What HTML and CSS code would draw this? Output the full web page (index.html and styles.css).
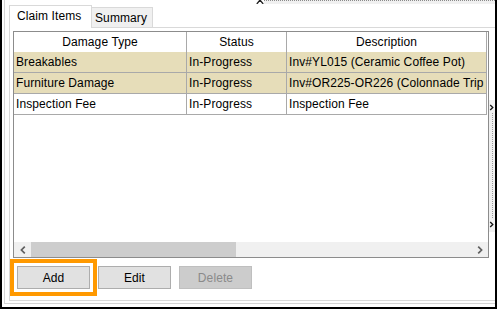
FILE: index.html
```html
<!DOCTYPE html>
<html>
<head>
<meta charset="utf-8">
<link rel="stylesheet" href="styles.css">
</head>
<body>
<div class="frame">
  <div class="outer">
    <div class="topstrip">
      <svg class="xmark" width="8" height="4" viewBox="0 0 8 4"><path d="M4 0 L0.8 4 M4 0 L7.2 4" stroke="#222" stroke-width="1.3" fill="none"/></svg>
      <div class="dots"></div>
    </div>
    <div class="tabs">
      <div class="tab active">Claim Items</div>
      <div class="tab">Summary</div>
    </div>
    <div class="panel">
      <div class="panel-row">
        <div class="grid">
          <div class="row head">
            <div class="cell">Damage Type</div>
            <div class="cell">Status</div>
            <div class="cell">Description</div>
          </div>
          <div class="row data sel">
            <div class="cell">Breakables</div>
            <div class="cell">In-Progress</div>
            <div class="cell">Inv#YL015 (Ceramic Coffee Pot)</div>
          </div>
          <div class="row data sel">
            <div class="cell">Furniture Damage</div>
            <div class="cell">In-Progress</div>
            <div class="cell">Inv#OR225-OR226 (Colonnade Trip</div>
          </div>
          <div class="row data">
            <div class="cell">Inspection Fee</div>
            <div class="cell">In-Progress</div>
            <div class="cell">Inspection Fee</div>
          </div>
          <div class="hscroll">
            <div class="sbtn"><svg width="6" height="8" viewBox="0 0 6 8"><path d="M4.8 0.6 L1.4 4 L4.8 7.4" stroke="#606060" stroke-width="1.7" fill="none"/></svg></div>
            <div class="thumb"></div>
            <div class="track"></div>
            <div class="sbtn"><svg width="6" height="8" viewBox="0 0 6 8"><path d="M1.2 0.6 L4.6 4 L1.2 7.4" stroke="#606060" stroke-width="1.7" fill="none"/></svg></div>
          </div>
        </div>
        <svg class="sliver" width="6" height="132" viewBox="0 0 6 132">
          <rect x="0" y="0" width="6" height="132" fill="#f0f0f0"/>
          <path d="M1.2 5 L3.8 7.5 L1.2 10" stroke="#111" stroke-width="1.3" fill="none"/>
          <line x1="3.5" y1="13" x2="3.5" y2="119" stroke="#9a9a9a" stroke-width="1" stroke-dasharray="1 1"/>
          <path d="M1.2 122 L3.8 124.5 L1.2 127" stroke="#111" stroke-width="1.3" fill="none"/>
        </svg>
      </div>
      <div class="buttons">
        <button class="btn focus">Add</button>
        <button class="btn">Edit</button>
        <button class="btn disabled">Delete</button>
      </div>
    </div>
  </div>
</div>
</body>
</html>
```
FILE: styles.css
```css
* { box-sizing: border-box; }
html, body { margin: 0; padding: 0; background: #fff; }
body {
  font-family: "Liberation Sans", Arial, sans-serif;
  font-size: 12px;
  letter-spacing: 0.1px;
  color: #000;
}
.frame {
  width: 497px;
  height: 309px;
  border-left: 2px solid #000;
  border-right: 2px solid #000;
  border-bottom: 2px solid #000;
  padding-left: 2px;
}
.outer {
  height: 304px;
  border-left: 1px solid #d5d5d5;
  border-bottom: 1px solid #d5d5d5;
  padding-left: 4px;
  display: flex;
  flex-direction: column;
}
.topstrip {
  height: 5px;
  display: flex;
  align-items: flex-start;
}
.xmark { margin-left: 247px; display: block; flex: none; }
.dots {
  flex: 1;
  height: 4px;
  border-top: 1px dotted #8a8a8a;
  background: #f0f0f0;
}
.tabs {
  height: 23px;
  display: flex;
  align-items: flex-end;
  margin-bottom: -1px;
  position: relative;
  z-index: 1;
}
.tab {
  border: 1px solid #d9d9d9;
  border-bottom: 0;
  line-height: 14px;
  white-space: nowrap;
}
.tab.active {
  width: 83px;
  height: 23px;
  background: #fff;
  padding: 3px 0 0 7px;
}
.tab:not(.active) {
  width: 61px;
  height: 20px;
  margin-bottom: 1px;
  background: #f0f0f0;
  padding: 3px 0 0 3px;
  border-left: 0;
}
.panel {
  height: 274px;
  border-left: 1px solid #d9d9d9;
  border-top: 1px solid #d9d9d9;
  border-bottom: 1px solid #d9d9d9;
  display: flex;
  flex-direction: column;
}
.panel-row {
  display: flex;
  align-items: flex-start;
  margin-top: 3px;
  padding-left: 3px;
}
.grid {
  width: 476px;
  height: 227px;
  border: 1px solid #8c8c8c;
  display: flex;
  flex-direction: column;
  background: #fff;
}
.row {
  display: grid;
  grid-template-columns: 173px 100px 200px;
}
.cell {
  border-right: 1px solid #a9a9a9;
  white-space: nowrap;
  overflow: hidden;
}
.head .cell {
  height: 20px;
  line-height: 20px;
  text-align: center;
}
.data .cell {
  height: 21px;
  line-height: 20px;
  border-bottom: 1px solid #a9a9a9;
  padding-left: 2px;
}
.sel .cell { background: #e6ddb9; }
.hscroll {
  margin-top: auto;
  height: 15px;
  display: flex;
  background: #f0f0f0;
}
.sbtn {
  width: 17px;
  display: flex;
  align-items: center;
  justify-content: center;
}
.sbtn svg { display: block; }
.thumb { width: 205px; background: #cdcdcd; }
.track { flex: 1; }
.sliver { display: block; margin-top: 69px; flex: none; }
.buttons {
  display: flex;
  gap: 8px;
  margin-top: 8px;
  margin-left: 7px;
}
.btn {
  width: 73px;
  height: 23px;
  font-family: inherit;
  font-size: 12px;
  letter-spacing: 0.1px;
  color: #000;
  background: #e1e1e1;
  border: 1px solid #adadad;
  border-radius: 0;
  padding: 0;
  margin: 0;
}
.btn.focus {
  outline: 4px solid #ff9900;
  outline-offset: 3px;
}
.btn.disabled {
  background: #cccccc;
  border-color: #bfbfbf;
  color: #8a8a8a;
}
```
